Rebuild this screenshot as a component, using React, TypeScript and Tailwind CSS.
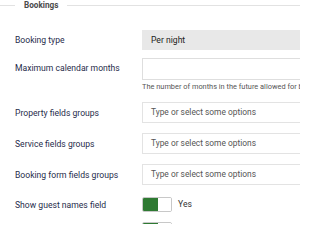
import React from "react";

const Label = ({ children }: { children?: React.ReactNode }) => (
  <div className="w-[127px] shrink-0 text-[8.6px] leading-[12px] text-[#1f2c4b]">{children}</div>
);

const Multi = () => (
  <div className="flex h-[21px] flex-1 items-center border border-r-0 border-[#e3e3e3] pl-[8px] text-[8.4px] text-[#555]">
    Type or select some options
  </div>
);

const Switch = ({ label = true }: { label?: boolean }) => (
  <div className="flex items-center">
    <div className="flex h-[15px] w-[30px] overflow-hidden rounded-[2px] border border-[#c8c8c8]">
      <div className="w-[15px] bg-[#2e7a32]" />
      <div className="flex-1 bg-white" />
    </div>
    {label && <span className="ml-[6px] text-[8.6px] text-[#333]">Yes</span>}
  </div>
);

export default function App() {
  return (
    <div
      className="h-[224px] w-[300px] overflow-hidden bg-white pl-[15px]"
      style={{ fontFamily: "Roboto, 'Liberation Sans', sans-serif" }}
    >
      <div className="-ml-[15px] flex items-center">
        <div className="h-px w-[15px] bg-[#e2e2e2]" />
        <div className="px-[9px] text-[8.2px] font-bold leading-[10px] text-[#4a4a4a]">Bookings</div>
        <div className="h-px flex-1 bg-[#e2e2e2]" />
      </div>

      <div className="mt-[20px] flex items-center">
        <Label>Booking type</Label>
        <div className="flex h-[20px] flex-1 items-center bg-[#e8e8e8] pl-[9px] text-[8.6px] text-[#222]">Per night</div>
      </div>

      <div className="mt-[8px] flex">
        <div className="pt-[4px]">
          <Label>Maximum calendar months</Label>
        </div>
        <div className="flex-1">
          <div className="h-[22px] border border-r-0 border-[#dedede]" />
          <div className="mt-[1px] whitespace-nowrap text-[7.4px] leading-[12px] text-[#555]">
            The number of months in the future allowed for bookings
          </div>
        </div>
      </div>

      <div className="mt-[9px] flex items-center">
        <Label>Property fields groups</Label>
        <Multi />
      </div>
      <div className="mt-[10px] flex items-center">
        <Label>Service fields groups</Label>
        <Multi />
      </div>
      <div className="mt-[10px] flex items-center">
        <Label>Booking form fields groups</Label>
        <Multi />
      </div>
      <div className="mt-[12px] flex items-center">
        <Label>Show guest names field</Label>
        <Switch />
      </div>
      <div className="mt-[10px] flex items-center">
        <Label />
        <Switch label={false} />
      </div>
    </div>
  );
}
